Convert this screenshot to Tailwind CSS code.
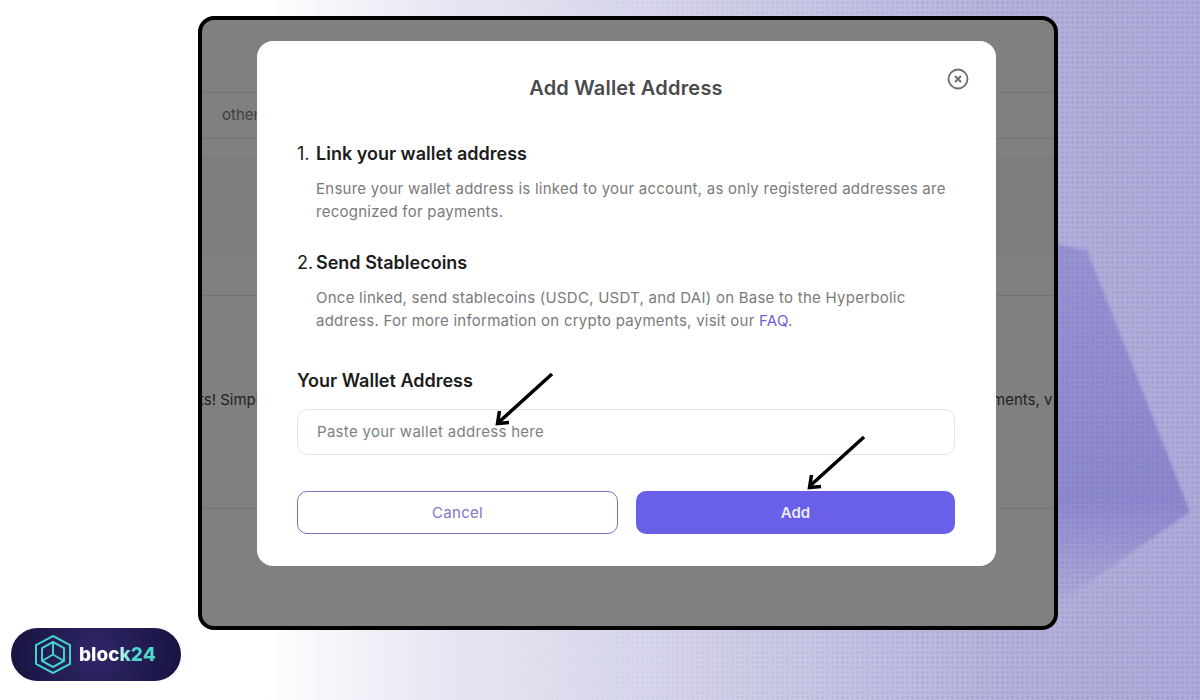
<!DOCTYPE html>
<html lang="en">
<head>
    <meta charset="UTF-8">
    <title>Add Wallet Address</title>
    <script src="https://cdn.jsdelivr.net/npm/@tailwindcss/browser@4"></script>
</head>
<body class="font-['Inter',sans-serif]">
    <div class="relative w-[1200px] h-[700px] overflow-hidden bg-[linear-gradient(90deg,#ffffff_22%,#e9e9f4_35%,#d2d1e8_58%,#b3b0da_85%,#adaad8_100%)]">
        <!-- background shape -->
        <svg class="absolute inset-0 blur-[1.5px]" width="1200" height="700" viewBox="0 0 1200 700">
            <defs>
                <linearGradient id="shapeFade" x1="0" y1="0" x2="0" y2="1">
                    <stop offset="0" stop-color="#6f6ac4" stop-opacity="0.4"/>
                    <stop offset="0.7" stop-color="#6f6ac4" stop-opacity="0.55"/>
                    <stop offset="1" stop-color="#6f6ac4" stop-opacity="0"/>
                </linearGradient>
            </defs>
            <polygon points="1050,243 1087,250 1190,512 1135,550 1050,610" fill="url(#shapeFade)"/>
        </svg>
        <div class="absolute inset-0 bg-[radial-gradient(#5a55b0_1px,transparent_1.5px)] bg-[length:5px_5px] opacity-15 [mask-image:linear-gradient(90deg,transparent_40%,black_80%)]"></div>

        <!-- logo -->
        <div class="absolute left-[11px] top-[628px] w-[170px] h-[53px] rounded-full bg-[radial-gradient(circle_at_50%_50%,#2f2768,#17133f)] flex items-center pl-[24px] gap-[8px]">
            <svg width="36" height="39" viewBox="0 0 36 39" fill="none" stroke="#45d0c8" stroke-width="2">
                <polygon points="18,1 35,10 35,29 18,38 1,29 1,10"/>
                <polygon points="18,7 29,13 29,26 18,32 7,26 7,13"/>
                <path d="M18 7V19.500M18 19.500L7 26M18 19.500L29 26"/>
            </svg>
            <span class="text-[19px] leading-none font-extrabold bg-[linear-gradient(90deg,#ffffff_45%,#4fd8c8_70%)] bg-clip-text text-transparent">block24</span>
        </div>

        <!-- window -->
        <div class="absolute left-[198px] top-[16px] w-[860px] h-[614px] border-4 border-black rounded-[16px] bg-[#808080] overflow-hidden">
            <!-- page dimmed behind the modal -->
            <div class="absolute left-0 right-0 top-[72px] h-[47px] border-y border-[#737373] pl-[20px] flex items-center text-[15px] text-[#3f3f3f]">other</div>
            <div class="absolute left-0 right-0 top-[138px] h-[100px] border-t border-[#787878] bg-[#7e7e7e]"></div>
            <div class="absolute left-0 right-0 top-[275px] h-[214px] border-y border-[#737373]"></div>
            <div class="absolute left-[-3px] top-[369px] text-[15px] text-[#222222] whitespace-nowrap">ts! Simple</div>
            <div class="absolute left-[790px] top-[369px] text-[15px] text-[#222222] whitespace-nowrap">ments, v</div>

            <!-- modal -->
            <div class="absolute left-[55px] top-[21px] w-[739px] h-[525px] rounded-[16px] bg-white pl-[40px] pr-[41px] pt-[35px]">
                <div class="relative">
                    <h2 class="text-[20px] leading-[24px] font-semibold tracking-[0.2px] text-[#4a4a4a] text-center">Add Wallet Address</h2>
                    <svg class="absolute right-[-14px] top-[-8px]" width="22" height="22" viewBox="0 0 22 22" fill="none" stroke="#6f6f6f">
                        <circle cx="11" cy="11" r="9.500" stroke-width="1.800"/>
                        <path d="M8 8l6 6M14 8l-6 6" stroke-width="2"/>
                    </svg>
                </div>

                <div class="mt-[42px] flex text-[18px] leading-[24px] font-semibold text-[#1c1c1c]">
                    <span class="w-[19px] font-normal">1.</span><span>Link your wallet address</span>
                </div>
                <p class="mt-[11px] ml-[19px] text-[15px] tracking-[0.25px] leading-[23px] text-[#7a7a7a]">Ensure your wallet address is linked to your account, as only registered addresses are<br>recognized for payments.</p>

                <div class="mt-[28px] flex text-[18px] leading-[24px] font-semibold text-[#1c1c1c]">
                    <span class="w-[19px] font-normal">2.</span><span>Send Stablecoins</span>
                </div>
                <p class="mt-[11px] ml-[19px] text-[15px] tracking-[0.25px] leading-[23px] text-[#7a7a7a]">Once linked, send stablecoins (USDC, USDT, and DAI) on Base to the Hyperbolic<br>address. For more information on crypto payments, visit our <span class="text-[#6b5fe0]">FAQ</span>.</p>

                <div class="mt-[37px] text-[18px] leading-[24px] font-semibold text-[#1c1c1c]">Your Wallet Address</div>
                <div class="mt-[16px] h-[46px] rounded-[10px] border border-[#e4e4e4] flex items-center px-[19px] text-[15px] tracking-[0.3px] text-[#7f7f7f]">Paste your wallet address here</div>

                <div class="mt-[36px] flex gap-[18px]">
                    <button class="flex-1 h-[43px] pt-[2px] rounded-[10px] border border-[#7a70c8] text-[15px] tracking-[0.3px] text-[#7f75c9]">Cancel</button>
                    <button class="flex-1 h-[43px] pt-[2px] rounded-[10px] bg-[#6a5fe8] text-[15px] font-semibold text-[#ecebfb]">Add</button>
                </div>
            </div>
        </div>

        <!-- arrows drawn over the screenshot -->
        <svg class="absolute inset-0 pointer-events-none" width="1200" height="700" viewBox="0 0 1200 700" fill="none" stroke="#000" stroke-width="3.500">
            <path d="M552 374L499 422"/>
            <path d="M509 422.500L497.500 423.500L499.500 411"/>
            <path d="M864 437L811 485"/>
            <path d="M821 486.500L809.500 487.500L811.500 475"/>
        </svg>
    </div>
</body>
</html>
